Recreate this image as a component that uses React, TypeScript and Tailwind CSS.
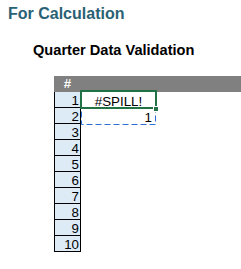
import React from "react";

const rows = [1, 2, 3, 4, 5, 6, 7, 8, 9, 10];

export default function App() {
  return (
    <div
      className="w-[241px] h-[269px] bg-white overflow-hidden"
      style={{ fontFamily: '"Liberation Sans", Arial, sans-serif' }}
    >
      <div className="pl-[8px] pt-[6px] h-[22px] text-[16px] leading-[16px] font-bold text-[#2a6175]">
        For Calculation
      </div>
      <div className="pl-[33px] mt-[21px] h-[15px] text-[14.6px] leading-[15px] font-bold text-black">
        Quarter Data Validation
      </div>
      <div className="ml-[54px] mt-[18px] flex flex-col">
        <div className="h-[16px] bg-[#808080] flex">
          <div className="w-[27px] text-center text-white font-bold text-[13.33px] leading-[15px]">#</div>
        </div>
        <div className="relative flex flex-col">
          {rows.map((r) => (
            <div key={r} className="flex h-[16px]">
              <div className="w-[27px] h-[16px] box-border border-x border-b border-black bg-[#ddebf7] flex items-end justify-end pr-[1px] text-[13.33px] leading-[12px] text-black">
                {r}
              </div>
              <div className="w-[75px] h-[16px] flex items-end justify-end pr-[4px] text-[13.33px] leading-[12px] text-black">
                {r === 1 ? <span className="w-full pl-[4px] text-center">#SPILL!</span> : r === 2 ? "1" : ""}
              </div>
            </div>
          ))}
          <svg className="absolute left-[27px] top-[16px] block" width="75" height="17" viewBox="0 0 75 17">
            <rect x="0.5" y="0.5" width="74" height="16" fill="none" stroke="#2f6fd8" strokeWidth="1" strokeDasharray="6 3" />
          </svg>
          <div className="absolute left-[26px] top-[-2px] w-[77px] h-[19px] border-2 border-[#217346]" />
          <div className="absolute left-[99px] top-[14px] w-[6px] h-[6px] bg-[#217346] border border-white" />
        </div>
      </div>
    </div>
  );
}
